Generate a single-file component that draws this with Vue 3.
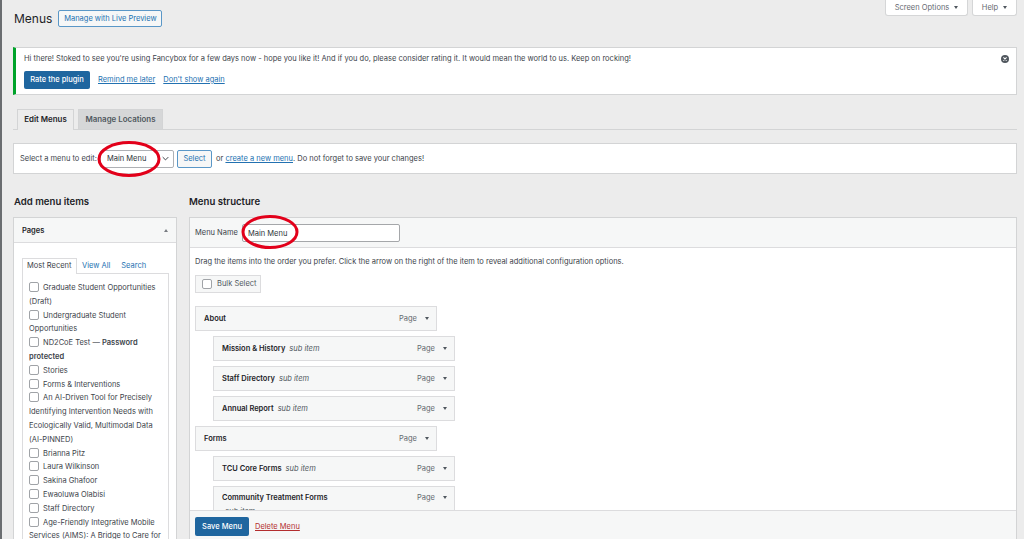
<script setup>
const pages = [
  { t: 'Graduate Student Opportunities (Draft)' },
  { t: 'Undergraduate Student Opportunities' },
  { t: 'ND2CoE Test — ', b: 'Password protected' },
  { t: 'Stories' },
  { t: 'Forms & Interventions' },
  { t: 'An AI-Driven Tool for Precisely Identifying Intervention Needs with Ecologically Valid, Multimodal Data (AI-PINNED)' },
  { t: 'Brianna Pitz' },
  { t: 'Laura Wilkinson' },
  { t: 'Sakina Ghafoor' },
  { t: 'Ewaoluwa Olabisi' },
  { t: 'Staff Directory' },
  { t: 'Age-Friendly Integrative Mobile Services (AIMS): A Bridge to Care for Older Adults' },
]
const items = [
  { t: 'About' },
  { t: 'Mission & History', sub: true },
  { t: 'Staff Directory', sub: true },
  { t: 'Annual Report', sub: true },
  { t: 'Forms' },
  { t: 'TCU Core Forms', sub: true },
  { t: 'Community Treatment Forms', sub: true, wrap: true },
]
</script>

<template>
  <div class="page">
    <div class="screen-meta">
      <div class="meta-btn opts">Screen Options <i class="caret"></i></div>
      <div class="meta-btn help">Help <i class="caret"></i></div>
    </div>

    <header class="head">
      <h1>Menus</h1>
      <a class="outline live">Manage with Live Preview</a>
    </header>

    <section class="notice">
      <p>Hi there! Stoked to see you're using Fancybox for a few days now - hope you like it! And if you do, please consider rating it. It would mean the world to us. Keep on rocking!</p>
      <div class="notice-actions">
        <a class="primary rate">Rate the plugin</a>
        <a class="link">Remind me later</a>
        <a class="link">Don't show again</a>
      </div>
      <svg class="dismiss" viewBox="0 0 10 10" width="8" height="8">
        <circle cx="5" cy="5" r="5" fill="#50575e" />
        <path d="M3 3l4 4M7 3l-4 4" stroke="#fff" stroke-width="1.3" />
      </svg>
    </section>

    <nav class="tabs">
      <div class="tab active">Edit Menus</div>
      <div class="tab">Manage Locations</div>
    </nav>

    <section class="select-bar">
      <span class="sel-label">Select a menu to edit:</span>
      <div class="fake-select">
        <span>Main Menu</span>
        <svg viewBox="0 0 10 6" width="7" height="5"><path d="M1 1l4 4 4-4" fill="none" stroke="#2c3338" stroke-width="1.3" /></svg>
      </div>
      <a class="outline sel-btn">Select</a>
      <span class="sel-text">or <a class="link">create a new menu</a>. Do not forget to save your changes!</span>
    </section>

    <div class="columns">
      <aside class="left">
        <h2>Add menu items</h2>
        <div class="box">
          <div class="box-head"><b>Pages</b><i class="caret up"></i></div>
          <div class="box-body">
            <div class="inner-tabs">
              <span class="itab on">Most Recent</span>
              <a class="itab-link">View All</a>
              <a class="itab-link">Search</a>
            </div>
            <ul class="checks">
              <li v-for="p in pages" :key="p.t">
                <span class="cb"></span>{{ p.t }}<b v-if="p.b">{{ p.b }}</b>
              </li>
            </ul>
          </div>
        </div>
      </aside>

      <main class="right">
        <h2>Menu structure</h2>
        <div class="box frame">
          <div class="name-row">
            <span class="name-label">Menu Name</span>
            <div class="name-input">Main Menu</div>
          </div>
          <div class="frame-body">
            <p class="drag">Drag the items into the order you prefer. Click the arrow on the right of the item to reveal additional configuration options.</p>
            <div class="bulk"><span class="cb"></span>Bulk Select</div>
            <div class="item-list">
              <div v-for="it in items" :key="it.t" class="item" :class="{ sub: it.sub, tall: it.wrap }">
                <div class="item-title">
                  <b>{{ it.t }}</b>
                  <em v-if="it.sub" :class="{ below: it.wrap }">sub item</em>
                </div>
                <span class="kind">Page</span>
                <i class="caret"></i>
              </div>
            </div>
          </div>
          <div class="foot">
            <a class="primary save">Save Menu</a>
            <a class="del">Delete Menu</a>
          </div>
        </div>
      </main>
    </div>

    <svg class="ring ring-a" viewBox="0 0 66 40" width="66" height="40">
      <ellipse cx="33" cy="20" rx="30" ry="16.5" fill="none" stroke="#e2001a" stroke-width="3" />
    </svg>
    <svg class="ring ring-b" viewBox="0 0 60 36" width="60" height="36">
      <ellipse cx="30" cy="18" rx="27" ry="15.5" fill="none" stroke="#e2001a" stroke-width="3" />
    </svg>
  </div>
</template>

<style>
html, body { margin: 0; background: #ececec; overflow: hidden; }
</style>

<style scoped>
.page {
  position: relative;
  box-sizing: border-box;
  height: 539px;
  overflow: hidden;
  display: flex;
  flex-direction: column;
  padding: 0 7px 0 13px;
  background: #ececec;
  color: #3c434a;
  font: 7.5px/14px Inter, "Liberation Sans", sans-serif;
}
.page::before {
  content: "";
  position: absolute;
  left: 0; top: 0; bottom: 0;
  width: 2px;
  background: #6a6d70;
}
.screen-meta {
  position: absolute;
  top: 0;
  right: 7px;
  display: flex;
  gap: 4px;
}
.meta-btn {
  display: flex;
  align-items: center;
  justify-content: center;
  gap: 5px;
  height: 16px;
  box-sizing: border-box;
  background: #fff;
  border: 1px solid #d5d6d7;
  border-top: 0;
  border-radius: 0 0 3px 3px;
  color: #646970;
}
.opts { width: 83px; }
.help { width: 45px; }
.caret {
  display: inline-block;
  flex: none;
  width: 0; height: 0;
  border-left: 2.5px solid transparent;
  border-right: 2.5px solid transparent;
  border-top: 3.5px solid #50575e;
}
.caret.up { border-top: 0; border-bottom: 3.5px solid #787c82; }

.head {
  display: flex;
  align-items: center;
  gap: 6px;
  height: 17px;
  margin-top: 10px;
  padding-left: 1px;
}
h1 {
  margin: 0;
  font-size: 12px;
  font-weight: 400;
  color: #1d2327;
}
.outline {
  display: flex;
  align-items: center;
  justify-content: center;
  box-sizing: border-box;
  white-space: nowrap;
  background: #f6f7f7;
  border: 1px solid #5a97c7;
  border-radius: 2px;
  color: #2271b1;
}
.live { width: 104px; height: 17px; }

.notice {
  position: relative;
  box-sizing: border-box;
  height: 48px;
  margin-top: 20px;
  padding: 4px 8px 0 8px;
  background: #fff;
  border: 1px solid #d3d4d5;
  border-left: 3px solid #00a32a;
}
.notice p { margin: 0; height: 14px; color: #3c434a; }
.notice-actions {
  display: flex;
  align-items: center;
  gap: 8px;
  margin-top: 5px;
}
.primary {
  display: flex;
  align-items: center;
  justify-content: center;
  box-sizing: border-box;
  white-space: nowrap;
  background: #1f669f;
  border-radius: 2px;
  color: #fff;
  font-weight: 500;
}
.rate { width: 66px; height: 18px; }
.link { color: #2271b1; text-decoration: underline; }
.dismiss { position: absolute; top: 7px; right: 7px; }

.tabs {
  display: flex;
  gap: 4px;
  box-sizing: border-box;
  height: 21px;
  margin-top: 14px;
  padding-left: 4px;
  border-bottom: 1px solid #d3d4d5;
  font-size: 7.9px;
  font-weight: 600;
}
.tab {
  display: flex;
  align-items: center;
  justify-content: center;
  box-sizing: border-box;
  height: 20px;
  width: 85px;
  padding-bottom: 1px;
  white-space: nowrap;
  background: #d6d7d8;
  border: 1px solid #d3d4d5;
  border-bottom: 0;
  color: #50575e;
}
.tab.active {
  width: 57px;
  height: 21px;
  padding-bottom: 2px;
  background: #ececec;
  color: #1d2327;
}

.select-bar {
  display: flex;
  align-items: center;
  box-sizing: border-box;
  height: 31px;
  margin-top: 13px;
  padding-left: 6px;
  background: #fff;
  border: 1px solid #d3d4d5;
}
.sel-label { width: 80px; white-space: nowrap; }
.fake-select {
  display: flex;
  align-items: center;
  justify-content: space-between;
  box-sizing: border-box;
  width: 74px;
  height: 18px;
  padding: 0 4px 0 6px;
  border: 1px solid #aeb1b5;
  border-radius: 2px;
  color: #2c3338;
}
.sel-btn { width: 35px; height: 18px; margin-left: 3px; }
.sel-text { margin-left: 4px; }

.columns {
  flex: 1;
  min-height: 0;
  display: flex;
  gap: 12px;
  margin-top: 21px;
}
h2 {
  margin: 0 0 8px;
  padding-left: 1px;
  height: 14px;
  font-size: 9.6px;
  line-height: 14px;
  font-weight: 600;
  color: #1d2327;
}
.right h2 { padding-left: 0; }
.left {
  width: 164px;
  display: flex;
  flex-direction: column;
  min-height: 0;
}
.right {
  flex: 1;
  min-width: 0;
  display: flex;
  flex-direction: column;
  min-height: 0;
}
.box {
  flex: 1;
  min-height: 0;
  overflow: hidden;
  box-sizing: border-box;
  background: #fff;
  border: 1px solid #d3d4d5;
  border-bottom: 0;
}
.box-head {
  display: flex;
  align-items: center;
  justify-content: space-between;
  box-sizing: border-box;
  height: 25px;
  padding: 1px 8px 0;
  background: #f6f7f7;
  border-bottom: 1px solid #dcdcde;
  color: #1d2327;
}
.box-head b { font-weight: 600; }
.box-body { padding: 15px 7px 0 8px; }
.inner-tabs {
  display: flex;
  align-items: flex-end;
  height: 15px;
  position: relative;
  z-index: 1;
  white-space: nowrap;
}
.itab {
  box-sizing: border-box;
  width: 55px;
  height: 16px;
  margin-bottom: -1px;
  padding: 0 0 0 4px;
  border: 1px solid #dcdcde;
  border-bottom: 0;
  background: #fff;
  color: #3c434a;
}
.itab-link { height: 14px; margin-left: 5px; color: #2271b1; }
.itab-link + .itab-link { margin-left: 11px; }
.checks {
  list-style: none;
  margin: 0;
  padding: 7px 4px 0 6px;
  border: 1px solid #dcdcde;
  border-bottom: 0;
  line-height: 13.8px;
}
.checks li { margin: 0; }
.checks b { font-weight: 600; }
.cb {
  display: inline-block;
  box-sizing: border-box;
  width: 10px;
  height: 10px;
  margin-right: 4px;
  vertical-align: -2px;
  background: #fff;
  border: 1px solid #a0a3a7;
  border-radius: 2px;
}

.frame { display: flex; flex-direction: column; }
.name-row {
  display: flex;
  align-items: center;
  flex: none;
  box-sizing: border-box;
  height: 30px;
  padding-left: 5px;
  background: #f6f7f7;
  border-bottom: 1px solid #dcdcde;
  color: #3c434a;
}
.name-label { width: 47px; white-space: nowrap; }
.name-input {
  box-sizing: border-box;
  width: 158px;
  height: 18px;
  padding-left: 5px;
  line-height: 17px;
  background: #fff;
  border: 1px solid #a5a7aa;
  border-radius: 2px;
  color: #2c3338;
}
.frame-body {
  flex: 1;
  min-height: 0;
  overflow: hidden;
  padding: 7px 5px 0;
}
.drag { margin: 0; }
.bulk {
  display: flex;
  align-items: center;
  box-sizing: border-box;
  width: 66px;
  height: 18px;
  margin-top: 6px;
  padding-left: 6px;
  white-space: nowrap;
  background: #f6f7f7;
  border: 1px solid #dcdcde;
  color: #50575e;
}
.bulk .cb { margin-right: 5px; }
.item-list { margin-top: 13px; }
.item {
  display: flex;
  align-items: center;
  box-sizing: border-box;
  width: 242px;
  height: 25px;
  margin-bottom: 5px;
  padding: 0 7px 0 8px;
  background: #f6f7f7;
  border: 1px solid #dcdcde;
}
.item.sub { margin-left: 18px; }
.item.tall { height: 36px; align-items: flex-start; padding-top: 4px; }
.item-title { flex: 1; white-space: nowrap; }
.item-title b { font-weight: 600; color: #1d2327; }
.item-title em { margin-left: 4px; color: #50575e; }
.item-title em.below { display: block; margin-left: 3px; }
.kind { margin-right: 8px; color: #646970; }
.tall .caret { margin-top: 5px; }
.foot {
  flex: none;
  display: flex;
  align-items: center;
  gap: 6px;
  box-sizing: border-box;
  height: 29px;
  padding: 3px 5px 0;
  background: #f6f7f7;
  border-top: 1px solid #dcdcde;
}
.save { width: 54px; height: 19px; }
.del { color: #b32d2e; text-decoration: underline; }

.ring { position: absolute; }
.ring-a { left: 96px; top: 139px; }
.ring-b { left: 240px; top: 214px; }
</style>
